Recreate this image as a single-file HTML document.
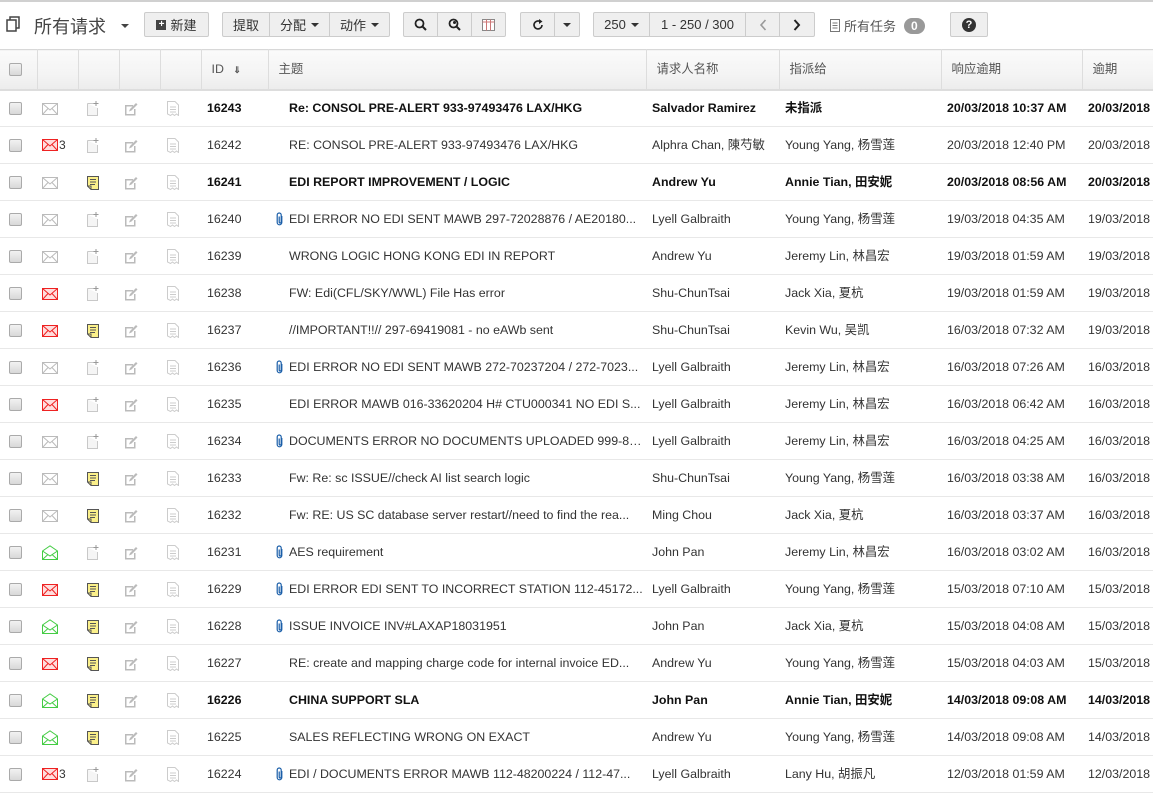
<!DOCTYPE html>
<html><head><meta charset="utf-8"><style>
*{box-sizing:border-box;margin:0;padding:0}
body{width:1153px;height:788px;overflow:hidden;background:#fff;font-family:"Liberation Sans","Noto Sans CJK SC",sans-serif;color:#333;font-size:12.4px;position:relative}
.top{position:absolute;top:0;left:0;width:1153px;height:2px;background:#d0d0d0}
.tb{position:absolute;top:12px;height:25px;border:1px solid #ccc;background:#efefef;border-radius:2px;display:flex;font-size:13px;color:#333}
.tb div{border-right:1px solid #ccc;display:flex;align-items:center;justify-content:center;height:100%}
.tb div:last-child{border-right:none}
.caret{display:inline-block;width:0;height:0;border-left:4px solid transparent;border-right:4px solid transparent;border-top:4px solid #333;margin-left:5px}
table{position:absolute;top:49px;left:0;border-collapse:collapse;table-layout:fixed;width:1160px}
th{height:40px;background:linear-gradient(#fafafa,#f4f4f4 60%,#ececec);border-top:1px solid #d8d8d8;border-bottom:2px solid #ddd;border-right:1px solid #ddd;font-weight:normal;text-align:left;color:#555;font-size:12.4px;padding-left:10px;line-height:16px}
td{height:37px;border-bottom:1px solid #e8e8e8;white-space:nowrap;overflow:hidden;text-overflow:ellipsis;padding-left:6px;font-size:12.4px;line-height:16px;vertical-align:middle}
td.c{padding:0;text-align:left}
.cb{display:inline-block;width:13px;height:13px;border:1px solid #aaa;border-radius:2px;background:linear-gradient(#f2f2f2,#d8d8d8);vertical-align:middle}
tr td:nth-child(1){padding-left:9px}
tr td:nth-child(2){padding-left:5px}
tr td:nth-child(3){padding-left:9px}
tr td:nth-child(4){padding-left:5px}
tr td:nth-child(5){padding-left:7px}
tr.b td{font-weight:bold;color:#111}
.sub{padding-left:21px !important;position:relative}
.clip{position:absolute;left:8px;top:11px}
svg{vertical-align:middle}
.n3{font-size:12px;color:#333;margin-left:1px;vertical-align:middle}
</style></head><body>
<svg width="0" height="0" style="position:absolute">
<defs>
<symbol id="mg" viewBox="0 0 16 12"><rect x="0.5" y="0.5" width="15" height="11" fill="#fff" stroke="#bbb"/><path d="M0.5 0.5L8 7L15.5 0.5M0.5 11.5L6 5.5M15.5 11.5L10 5.5" fill="none" stroke="#bbb"/></symbol>
<symbol id="mr" viewBox="0 0 16 12"><rect x="0.5" y="0.5" width="15" height="11" fill="#fdd" stroke="#e22"/><path d="M0.5 0.5L8 7L15.5 0.5M0.5 11.5L6 5.5M15.5 11.5L10 5.5" fill="none" stroke="#e22"/></symbol>
<symbol id="mo" viewBox="0 0 16 15"><path d="M0.5 6L8 0.8L15.5 6V14.5H0.5Z" fill="#fff" stroke="#4c4"/><path d="M0.5 6L8 11L15.5 6M0.5 14.5L6 9.5M15.5 14.5L10 9.5" fill="none" stroke="#4c4"/></symbol>
<symbol id="ne" viewBox="0 0 12 15"><path d="M0.5 2.5H7M0.5 2.5V14.5H10.5V7" fill="#f5f5f5" stroke="#c8c8c8"/><path d="M9 0V5M6.5 2.5H11.5" stroke="#999"/></symbol>
<symbol id="ny" viewBox="0 0 12 14"><path d="M0.5 0.5H11.5V13.5H4L0.5 10Z" fill="#fbf08a" stroke="#555"/><path d="M3 3.5H9M3 6H9M3 8.5H8" stroke="#555"/><path d="M0.5 10H4V13.5" fill="none" stroke="#555"/></symbol>
<symbol id="ed" viewBox="0 0 15 14"><path d="M1 3H9V4.5H2.5V12H10V7H11.5V13.5H1Z" fill="#bbb"/><path d="M5 9.5L6 7L12 1L13.5 2.5L7.5 8.5Z" fill="#bbb"/></symbol>
<symbol id="dc" viewBox="0 0 12 15"><path d="M0.5 0.5H8L11.5 4V14.5L9.5 13L7.5 14.5L5.5 13L3.5 14.5L0.5 13Z" fill="#fff" stroke="#ccc"/><path d="M3 6H9M3 8.5H9M3 11H9" stroke="#ccc"/></symbol>
<symbol id="cl" viewBox="0 0 8 14"><path d="M5.8 4V10.5A2.3 2.3 0 0 1 1.2 10.5V3A2 2 0 0 1 5.2 3V10A1 1 0 0 1 3.2 10V4.5" fill="none" stroke="#1a5ea8" stroke-width="1.2"/></symbol>
</defs></svg>
<div class="top"></div>
<svg style="position:absolute;left:6px;top:16px" width="14" height="16" viewBox="0 0 14 16"><rect x="4" y="1" width="9" height="11" fill="none" stroke="#444" stroke-width="1.5"/><rect x="1" y="4" width="9" height="11" fill="#fff" stroke="#444" stroke-width="1.5"/></svg>
<div style="position:absolute;left:34px;top:13px;font-size:18px;color:#444">所有请求</div>
<span class="caret" style="position:absolute;left:116px;top:24px;border-top-color:#444"></span>
<div class="tb" style="left:144px;width:65px"><div style="width:100%"><span style="display:inline-block;width:10px;height:10px;background:#444;color:#fff;font-size:10px;line-height:10px;text-align:center;margin-right:4px;font-weight:bold">+</span>新建</div></div>
<div class="tb" style="left:222px;width:168px"><div style="width:47px">提取</div><div style="width:60px">分配<span class="caret"></span></div><div style="flex:1">动作<span class="caret"></span></div></div>
<div class="tb" style="left:403px;width:103px"><div style="width:34px"><svg width="13" height="13" viewBox="0 0 13 13"><circle cx="5.5" cy="5.5" r="4" fill="none" stroke="#222" stroke-width="1.8"/><path d="M8.5 8.5L12 12" stroke="#222" stroke-width="2"/></svg></div><div style="width:34px"><svg width="13" height="13" viewBox="0 0 13 13"><circle cx="5.5" cy="5.5" r="4" fill="none" stroke="#222" stroke-width="1.8"/><path d="M8.5 8.5L12 12" stroke="#222" stroke-width="2"/><circle cx="6.5" cy="4.5" r="1.5" fill="#222"/></svg></div><div style="flex:1"><svg width="13" height="12" viewBox="0 0 13 12"><rect x=".5" y=".5" width="12" height="11" fill="#fff" stroke="#888"/><path d="M.5 3H12.5M4.5 .5V11.5M8.5 .5V11.5" stroke="#c77"/></svg></div></div>
<div class="tb" style="left:520px;width:60px"><div style="width:34px"><svg width="12" height="12" viewBox="0 0 12 12"><path d="M10 6A4 4 0 1 1 8 2.5" fill="none" stroke="#222" stroke-width="1.6"/><path d="M7 0L10.5 2.5L7 5Z" fill="#222"/></svg></div><div style="flex:1"><span class="caret" style="margin:0"></span></div></div>
<div class="tb" style="left:593px;width:222px"><div style="width:56px">250<span class="caret"></span></div><div style="width:96px">1 - 250 / 300</div><div style="width:34px"><svg width="8" height="12" viewBox="0 0 8 12"><path d="M6.5 1L2 6L6.5 11" fill="none" stroke="#999" stroke-width="1.6"/></svg></div><div style="flex:1"><svg width="8" height="12" viewBox="0 0 8 12"><path d="M1.5 1L6 6L1.5 11" fill="none" stroke="#222" stroke-width="2"/></svg></div></div>
<div style="position:absolute;left:830px;top:16px;color:#555;display:flex;align-items:center;font-size:13px"><svg width="10" height="13" viewBox="0 0 10 13"><path d="M.5 .5H9.5V12.5H.5Z M2.5 4H7.5M2.5 6.5H7.5M2.5 9H7.5" fill="none" stroke="#777"/></svg><span style="margin-left:4px">所有任务</span><span style="margin-left:8px;background:#999;color:#fff;border-radius:9px;padding:0 7px;font-size:12px;font-weight:bold;line-height:16px">0</span></div>
<div class="tb" style="left:950px;width:38px"><div style="width:100%"><span style="display:inline-block;width:14px;height:14px;border-radius:7px;background:#333;color:#fff;font-size:11px;line-height:14px;text-align:center;font-weight:bold">?</span></div></div>
<table>
<colgroup><col style="width:37px"><col style="width:41px"><col style="width:41px"><col style="width:41px"><col style="width:41px"><col style="width:67px"><col style="width:378px"><col style="width:133px"><col style="width:162px"><col style="width:141px"><col style="width:78px"></colgroup>
<tr><th style="padding:0 0 0 9px"><span class="cb"></span></th><th></th><th></th><th></th><th></th><th>ID <span style="font-size:9px;margin-left:6px;font-weight:bold">&#8659;</span></th><th>主题</th><th>请求人名称</th><th>指派给</th><th>响应逾期</th><th>逾期</th></tr>
<tr class="b"><td class="c"><span class="cb"></span></td><td class="c"><svg width="16" height="12"><use href="#mg"/></svg></td><td class="c"><svg width="12" height="15"><use href="#ne"/></svg></td><td class="c"><svg width="15" height="14"><use href="#ed"/></svg></td><td class="c"><svg width="12" height="15"><use href="#dc"/></svg></td><td>16243</td><td class="sub">Re: CONSOL PRE-ALERT 933-97493476 LAX/HKG</td><td>Salvador Ramirez</td><td>未指派</td><td>20/03/2018 10:37 AM</td><td>20/03/2018</td></tr>
<tr><td class="c"><span class="cb"></span></td><td class="c"><svg width="16" height="12"><use href="#mr"/></svg><span class="n3">3</span></td><td class="c"><svg width="12" height="15"><use href="#ne"/></svg></td><td class="c"><svg width="15" height="14"><use href="#ed"/></svg></td><td class="c"><svg width="12" height="15"><use href="#dc"/></svg></td><td>16242</td><td class="sub">RE: CONSOL PRE-ALERT 933-97493476 LAX/HKG</td><td>Alphra Chan, 陳芍敏</td><td>Young Yang, 杨雪莲</td><td>20/03/2018 12:40 PM</td><td>20/03/2018</td></tr>
<tr class="b"><td class="c"><span class="cb"></span></td><td class="c"><svg width="16" height="12"><use href="#mg"/></svg></td><td class="c"><svg width="12" height="14"><use href="#ny"/></svg></td><td class="c"><svg width="15" height="14"><use href="#ed"/></svg></td><td class="c"><svg width="12" height="15"><use href="#dc"/></svg></td><td>16241</td><td class="sub">EDI REPORT IMPROVEMENT / LOGIC</td><td>Andrew Yu</td><td>Annie Tian, 田安妮</td><td>20/03/2018 08:56 AM</td><td>20/03/2018</td></tr>
<tr><td class="c"><span class="cb"></span></td><td class="c"><svg width="16" height="12"><use href="#mg"/></svg></td><td class="c"><svg width="12" height="15"><use href="#ne"/></svg></td><td class="c"><svg width="15" height="14"><use href="#ed"/></svg></td><td class="c"><svg width="12" height="15"><use href="#dc"/></svg></td><td>16240</td><td class="sub"><svg class="clip" width="8" height="14"><use href="#cl"/></svg>EDI ERROR NO EDI SENT MAWB 297-72028876 / AE20180...</td><td>Lyell Galbraith</td><td>Young Yang, 杨雪莲</td><td>19/03/2018 04:35 AM</td><td>19/03/2018</td></tr>
<tr><td class="c"><span class="cb"></span></td><td class="c"><svg width="16" height="12"><use href="#mg"/></svg></td><td class="c"><svg width="12" height="15"><use href="#ne"/></svg></td><td class="c"><svg width="15" height="14"><use href="#ed"/></svg></td><td class="c"><svg width="12" height="15"><use href="#dc"/></svg></td><td>16239</td><td class="sub">WRONG LOGIC HONG KONG EDI IN REPORT</td><td>Andrew Yu</td><td>Jeremy Lin, 林昌宏</td><td>19/03/2018 01:59 AM</td><td>19/03/2018</td></tr>
<tr><td class="c"><span class="cb"></span></td><td class="c"><svg width="16" height="12"><use href="#mr"/></svg></td><td class="c"><svg width="12" height="15"><use href="#ne"/></svg></td><td class="c"><svg width="15" height="14"><use href="#ed"/></svg></td><td class="c"><svg width="12" height="15"><use href="#dc"/></svg></td><td>16238</td><td class="sub">FW: Edi(CFL/SKY/WWL) File Has error</td><td>Shu-ChunTsai</td><td>Jack Xia, 夏杭</td><td>19/03/2018 01:59 AM</td><td>19/03/2018</td></tr>
<tr><td class="c"><span class="cb"></span></td><td class="c"><svg width="16" height="12"><use href="#mr"/></svg></td><td class="c"><svg width="12" height="14"><use href="#ny"/></svg></td><td class="c"><svg width="15" height="14"><use href="#ed"/></svg></td><td class="c"><svg width="12" height="15"><use href="#dc"/></svg></td><td>16237</td><td class="sub">//IMPORTANT!!// 297-69419081 - no eAWb sent</td><td>Shu-ChunTsai</td><td>Kevin Wu, 吴凯</td><td>16/03/2018 07:32 AM</td><td>19/03/2018</td></tr>
<tr><td class="c"><span class="cb"></span></td><td class="c"><svg width="16" height="12"><use href="#mg"/></svg></td><td class="c"><svg width="12" height="15"><use href="#ne"/></svg></td><td class="c"><svg width="15" height="14"><use href="#ed"/></svg></td><td class="c"><svg width="12" height="15"><use href="#dc"/></svg></td><td>16236</td><td class="sub"><svg class="clip" width="8" height="14"><use href="#cl"/></svg>EDI ERROR NO EDI SENT MAWB 272-70237204 / 272-7023...</td><td>Lyell Galbraith</td><td>Jeremy Lin, 林昌宏</td><td>16/03/2018 07:26 AM</td><td>16/03/2018</td></tr>
<tr><td class="c"><span class="cb"></span></td><td class="c"><svg width="16" height="12"><use href="#mr"/></svg></td><td class="c"><svg width="12" height="15"><use href="#ne"/></svg></td><td class="c"><svg width="15" height="14"><use href="#ed"/></svg></td><td class="c"><svg width="12" height="15"><use href="#dc"/></svg></td><td>16235</td><td class="sub">EDI ERROR MAWB 016-33620204 H# CTU000341 NO EDI S...</td><td>Lyell Galbraith</td><td>Jeremy Lin, 林昌宏</td><td>16/03/2018 06:42 AM</td><td>16/03/2018</td></tr>
<tr><td class="c"><span class="cb"></span></td><td class="c"><svg width="16" height="12"><use href="#mg"/></svg></td><td class="c"><svg width="12" height="15"><use href="#ne"/></svg></td><td class="c"><svg width="15" height="14"><use href="#ed"/></svg></td><td class="c"><svg width="12" height="15"><use href="#dc"/></svg></td><td>16234</td><td class="sub"><svg class="clip" width="8" height="14"><use href="#cl"/></svg>DOCUMENTS ERROR NO DOCUMENTS UPLOADED 999-86...</td><td>Lyell Galbraith</td><td>Jeremy Lin, 林昌宏</td><td>16/03/2018 04:25 AM</td><td>16/03/2018</td></tr>
<tr><td class="c"><span class="cb"></span></td><td class="c"><svg width="16" height="12"><use href="#mg"/></svg></td><td class="c"><svg width="12" height="14"><use href="#ny"/></svg></td><td class="c"><svg width="15" height="14"><use href="#ed"/></svg></td><td class="c"><svg width="12" height="15"><use href="#dc"/></svg></td><td>16233</td><td class="sub">Fw: Re: sc ISSUE//check AI list search logic</td><td>Shu-ChunTsai</td><td>Young Yang, 杨雪莲</td><td>16/03/2018 03:38 AM</td><td>16/03/2018</td></tr>
<tr><td class="c"><span class="cb"></span></td><td class="c"><svg width="16" height="12"><use href="#mg"/></svg></td><td class="c"><svg width="12" height="14"><use href="#ny"/></svg></td><td class="c"><svg width="15" height="14"><use href="#ed"/></svg></td><td class="c"><svg width="12" height="15"><use href="#dc"/></svg></td><td>16232</td><td class="sub">Fw: RE: US SC database server restart//need to find the rea...</td><td>Ming Chou</td><td>Jack Xia, 夏杭</td><td>16/03/2018 03:37 AM</td><td>16/03/2018</td></tr>
<tr><td class="c"><span class="cb"></span></td><td class="c"><svg width="16" height="15"><use href="#mo"/></svg></td><td class="c"><svg width="12" height="15"><use href="#ne"/></svg></td><td class="c"><svg width="15" height="14"><use href="#ed"/></svg></td><td class="c"><svg width="12" height="15"><use href="#dc"/></svg></td><td>16231</td><td class="sub"><svg class="clip" width="8" height="14"><use href="#cl"/></svg>AES requirement</td><td>John Pan</td><td>Jeremy Lin, 林昌宏</td><td>16/03/2018 03:02 AM</td><td>16/03/2018</td></tr>
<tr><td class="c"><span class="cb"></span></td><td class="c"><svg width="16" height="12"><use href="#mr"/></svg></td><td class="c"><svg width="12" height="14"><use href="#ny"/></svg></td><td class="c"><svg width="15" height="14"><use href="#ed"/></svg></td><td class="c"><svg width="12" height="15"><use href="#dc"/></svg></td><td>16229</td><td class="sub"><svg class="clip" width="8" height="14"><use href="#cl"/></svg>EDI ERROR EDI SENT TO INCORRECT STATION 112-45172...</td><td>Lyell Galbraith</td><td>Young Yang, 杨雪莲</td><td>15/03/2018 07:10 AM</td><td>15/03/2018</td></tr>
<tr><td class="c"><span class="cb"></span></td><td class="c"><svg width="16" height="15"><use href="#mo"/></svg></td><td class="c"><svg width="12" height="14"><use href="#ny"/></svg></td><td class="c"><svg width="15" height="14"><use href="#ed"/></svg></td><td class="c"><svg width="12" height="15"><use href="#dc"/></svg></td><td>16228</td><td class="sub"><svg class="clip" width="8" height="14"><use href="#cl"/></svg>ISSUE INVOICE INV#LAXAP18031951</td><td>John Pan</td><td>Jack Xia, 夏杭</td><td>15/03/2018 04:08 AM</td><td>15/03/2018</td></tr>
<tr><td class="c"><span class="cb"></span></td><td class="c"><svg width="16" height="12"><use href="#mr"/></svg></td><td class="c"><svg width="12" height="14"><use href="#ny"/></svg></td><td class="c"><svg width="15" height="14"><use href="#ed"/></svg></td><td class="c"><svg width="12" height="15"><use href="#dc"/></svg></td><td>16227</td><td class="sub">RE: create and mapping charge code for internal invoice ED...</td><td>Andrew Yu</td><td>Young Yang, 杨雪莲</td><td>15/03/2018 04:03 AM</td><td>15/03/2018</td></tr>
<tr class="b"><td class="c"><span class="cb"></span></td><td class="c"><svg width="16" height="15"><use href="#mo"/></svg></td><td class="c"><svg width="12" height="14"><use href="#ny"/></svg></td><td class="c"><svg width="15" height="14"><use href="#ed"/></svg></td><td class="c"><svg width="12" height="15"><use href="#dc"/></svg></td><td>16226</td><td class="sub">CHINA SUPPORT SLA</td><td>John Pan</td><td>Annie Tian, 田安妮</td><td>14/03/2018 09:08 AM</td><td>14/03/2018</td></tr>
<tr><td class="c"><span class="cb"></span></td><td class="c"><svg width="16" height="15"><use href="#mo"/></svg></td><td class="c"><svg width="12" height="14"><use href="#ny"/></svg></td><td class="c"><svg width="15" height="14"><use href="#ed"/></svg></td><td class="c"><svg width="12" height="15"><use href="#dc"/></svg></td><td>16225</td><td class="sub">SALES REFLECTING WRONG ON EXACT</td><td>Andrew Yu</td><td>Young Yang, 杨雪莲</td><td>14/03/2018 09:08 AM</td><td>14/03/2018</td></tr>
<tr><td class="c"><span class="cb"></span></td><td class="c"><svg width="16" height="12"><use href="#mr"/></svg><span class="n3">3</span></td><td class="c"><svg width="12" height="15"><use href="#ne"/></svg></td><td class="c"><svg width="15" height="14"><use href="#ed"/></svg></td><td class="c"><svg width="12" height="15"><use href="#dc"/></svg></td><td>16224</td><td class="sub"><svg class="clip" width="8" height="14"><use href="#cl"/></svg>EDI / DOCUMENTS ERROR MAWB 112-48200224 / 112-47...</td><td>Lyell Galbraith</td><td>Lany Hu, 胡振凡</td><td>12/03/2018 01:59 AM</td><td>12/03/2018</td></tr>
</table>
</body></html>
